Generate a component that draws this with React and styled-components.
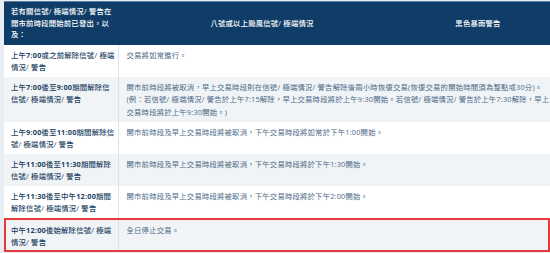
import React from "react";
import styled, { createGlobalStyle } from "styled-components";

const GlobalStyle = createGlobalStyle`
  html, body {
    margin: 0;
    padding: 0;
    background: #e8edf1;
    overflow: hidden;
  }
  body {
    font-family: "Open Sans", "Noto Sans CJK TC", sans-serif;
  }
`;

const Wrapper = styled.div`
  padding: 1px 0 0 4px;
  width: 550px;
  height: 253px;
  box-sizing: border-box;
  overflow: hidden;
`;

const Table = styled.table`
  width: 546px;
  border-collapse: collapse;
  table-layout: fixed;
  background: #fff;
  font-size: 7.35px;
  letter-spacing: 0.2px;
`;

const HeadRow = styled.tr`
  background: #0f3d67;
  border-top: 1px solid #5b7fa3;
`;

const Th = styled.th`
  color: #fff;
  font-weight: 500;
  line-height: 11.5px;
  padding: 4px 3px 4px 7px;
  text-align: ${(props) => (props.left ? "left" : "center")};
  vertical-align: middle;
  height: 34px;
`;

const Row = styled.tr`
  background: ${(props) => (props.shade ? "#f1f4f7" : "#fff")};
  outline: ${(props) => (props.alert ? "2px solid #e53b3b" : "none")};
  outline-offset: -2px;
`;

const Label = styled.td`
  color: #223f5f;
  font-weight: 500;
  line-height: 12px;
  padding: ${(props) => (props.alert ? "6px 3px 4px 7px" : "4px 3px 4px 7px")};
  vertical-align: top;
  border-right: 1px solid #dde3e9;
  strong {
    font-weight: 700;
  }
`;

const Text = styled.td`
  color: #4b6886;
  line-height: 12.5px;
  padding: ${(props) => (props.alert ? "6px 4px 4px 8px" : "4px 4px 4px 8px")};
  vertical-align: top;
`;

const Line = styled.span`
  display: block;
  white-space: nowrap;
`;

const Time = ({ children }) => <strong>{children}</strong>;

const App = () => {
  return (
    <Wrapper>
      <GlobalStyle />
      <Table>
        <colgroup>
          <col style={{ width: "114px" }} />
          <col style={{ width: "284px" }} />
          <col style={{ width: "148px" }} />
        </colgroup>
        <thead>
          <HeadRow>
            <Th left>若有關信號/ 極端情況/ 警告在開市前時段開始前已發出，以及：</Th>
            <Th>八號或以上颱風信號/ 極端情況</Th>
            <Th>黑色暴雨警告</Th>
          </HeadRow>
        </thead>
        <tbody>
          <Row>
            <Label>上午<Time>7:00</Time>或之前解除信號/ 極端情況/ 警告</Label>
            <Text colSpan={2}>交易將如常進行。</Text>
          </Row>
          <Row shade>
            <Label>上午<Time>7:00</Time>後至<Time>9:00</Time>期間解除信信號/ 極端情況/ 警告</Label>
            <Text colSpan={2}>
              <Line>開市前時段將被取消，早上交易時段則在信號/ 極端情況/ 警告解除後兩小時恢復交易(恢復交易的開始時間須為整點或30分)。</Line>
              <Line>(例：若信號/ 極端情況/ 警告於上午7:15解除，早上交易時段將於上午9:30開始。若信號/ 極端情況/ 警告於上午7:30解除，早上</Line>
              <Line>交易時段將於上午9:30開始。)</Line>
            </Text>
          </Row>
          <Row>
            <Label>上午<Time>9:00</Time>後至<Time>11:00</Time>期間解除信號/ 極端情況/ 警告</Label>
            <Text colSpan={2}>開市前時段及早上交易時段將被取消，下午交易時段將如常於下午1:00開始。</Text>
          </Row>
          <Row shade>
            <Label>上午<Time>11:00</Time>後至<Time>11:30</Time>期間解除信號/ 極端情況/ 警告</Label>
            <Text colSpan={2}>開市前時段及早上交易時段將被取消，下午交易時段將於下午1:30開始。</Text>
          </Row>
          <Row>
            <Label>上午<Time>11:30</Time>後至中午<Time>12:00</Time>期間解除信號/ 極端情況/ 警告</Label>
            <Text colSpan={2}>開市前時段及早上交易時段將被取消，下午交易時段將於下午2:00開始。</Text>
          </Row>
          <Row shade alert>
            <Label alert>中午<Time>12:00</Time>後始解除信號/ 極端情況/ 警告</Label>
            <Text alert colSpan={2}>全日停止交易。</Text>
          </Row>
        </tbody>
      </Table>
    </Wrapper>
  );
};

export default App;
